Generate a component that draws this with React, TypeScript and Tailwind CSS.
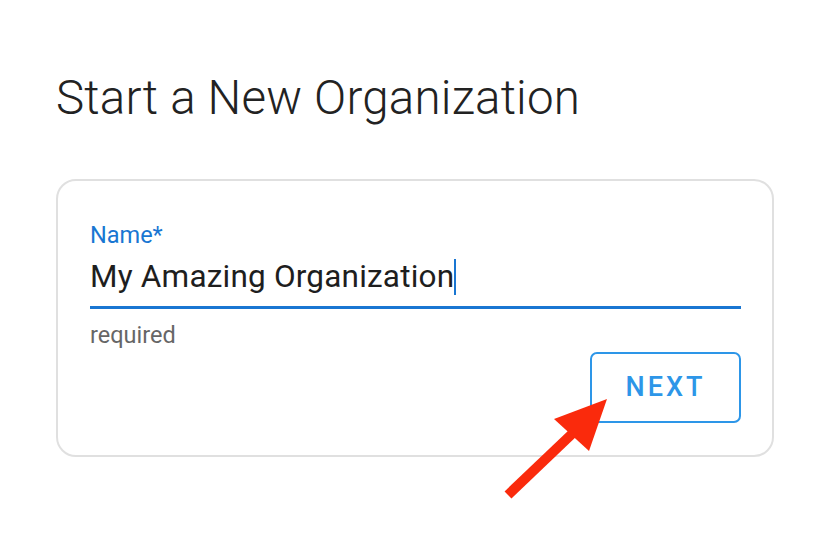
import React from "react";

function Arrow() {
  return (
    <svg
      className="absolute left-[498px] top-[392px]"
      width="120"
      height="112"
      viewBox="0 0 120 112"
    >
      <line x1="10" y1="103" x2="76" y2="40" stroke="#fa2a0c" strokeWidth="10" />
      <polygon points="109,7 56,27 91,59" fill="#fa2a0c" />
    </svg>
  );
}

export default function App() {
  return (
    <div
      className="relative w-[838px] h-[544px] bg-white overflow-hidden"
      style={{ fontFamily: "Roboto, 'Liberation Sans', sans-serif" }}
    >
      <div className="pl-[56px] pr-[64px] pt-[66px]">
        <h1 className="text-[47.5px] font-light text-[#222] leading-[64px] tracking-[0.2px]">
          Start a New Organization
        </h1>

        <div className="mt-[49px] h-[278px] rounded-[20px] border-2 border-[#e0e0e0] pl-[32px] pr-[31px] pt-[40px]">
          <label className="block text-[23.5px] leading-[28px] text-[#1976d2]">Name*</label>
          <div className="flex items-end h-[60px] pb-[9px] border-b-[3px] border-[#1976d2]">
            <span className="text-[31.5px] text-[#1e1e1e] leading-[40px] tracking-[0.2px]">
              My Amazing Organization
            </span>
            <span className="w-[2px] h-[36px] mb-[2px] bg-[#1976d2]" />
          </div>
          <div className="mt-[12px] text-[23.5px] leading-[28px] text-[#666]">required</div>
          <div className="flex justify-end mt-[3px]">
            <button className="w-[151px] h-[71px] rounded-[7px] border-2 border-[#2d96e8] text-[#2d96e8] text-[27px] font-medium tracking-[3px]">
              NEXT
            </button>
          </div>
        </div>
      </div>
      <Arrow />
    </div>
  );
}
